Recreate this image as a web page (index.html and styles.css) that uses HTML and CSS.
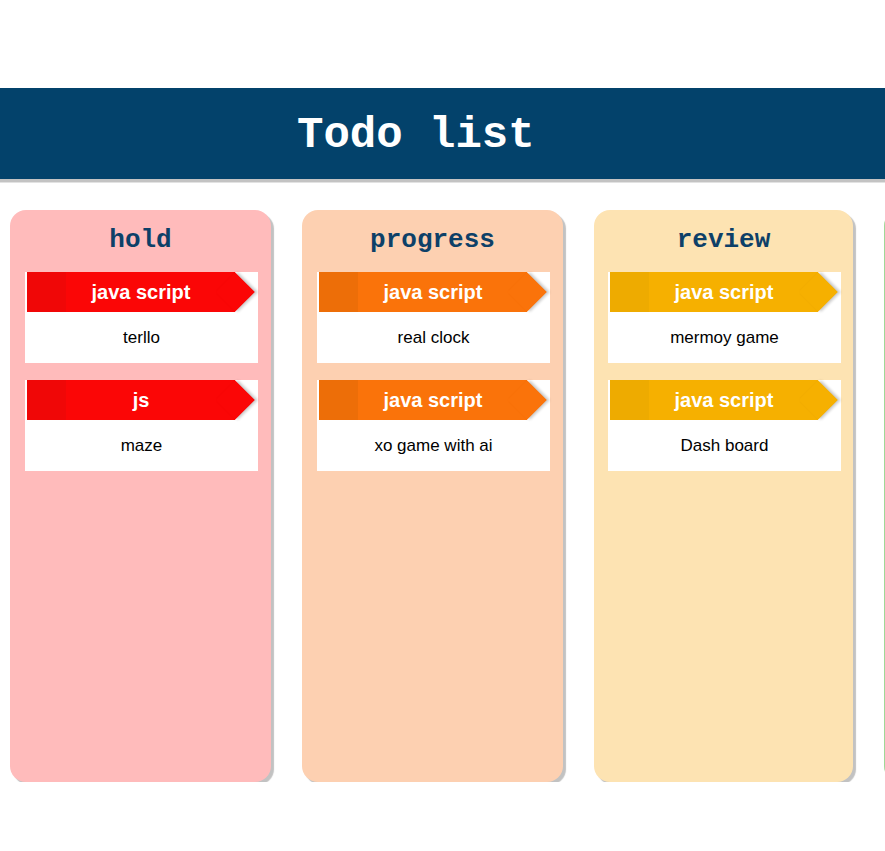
FILE: index.html
```html
<!DOCTYPE html>
<html>
<head>
<meta charset="utf-8">
<title>Todo list</title>
<link rel="stylesheet" href="styles.css">
</head>
<body>
<header class="top">
  <h1 class="title">Todo list</h1>
</header>
<main class="board">
  <section class="col col-hold">
    <h2 class="col-title">hold</h2>
    <div class="card">
      <div class="tag">java script</div>
      <div class="card-body">terllo</div>
    </div>
    <div class="card">
      <div class="tag">js</div>
      <div class="card-body">maze</div>
    </div>
  </section>
  <section class="col col-progress">
    <h2 class="col-title">progress</h2>
    <div class="card">
      <div class="tag">java script</div>
      <div class="card-body">real clock</div>
    </div>
    <div class="card">
      <div class="tag">java script</div>
      <div class="card-body">xo game with ai</div>
    </div>
  </section>
  <section class="col col-review">
    <h2 class="col-title">review</h2>
    <div class="card">
      <div class="tag">java script</div>
      <div class="card-body">mermoy game</div>
    </div>
    <div class="card">
      <div class="tag">java script</div>
      <div class="card-body">Dash board</div>
    </div>
  </section>
  <section class="col col-done"></section>
</main>
</body>
</html>
```
FILE: styles.css
```css
html, body {
  margin: 0;
  padding: 0;
  background: #ffffff;
  overflow: hidden;
}

body {
  font-family: "Liberation Sans", Arial, sans-serif;
}

.top {
  margin-top: 88px;
  height: 91px;
  background: #03426b;
  box-shadow: 0 3px 0 #c3c3c3, 0 4px 0 #e2e2e2;
  display: flex;
  align-items: center;
}

.title {
  margin: 0 0 0 297px;
  font-family: "Liberation Mono", "Courier New", monospace;
  font-weight: bold;
  font-size: 44px;
  color: #ffffff;
  line-height: 1;
  padding-top: 2px;
}

.board {
  display: flex;
  gap: 30px;
  padding: 31px 0 0 10px;
  width: 1200px;
}

.col {
  flex: 0 0 261px;
  height: 572px;
  border-radius: 16px;
  box-shadow: 3px 3px 1px #c2c2c2;
  box-sizing: border-box;
  padding-top: 15px;
}

.col-progress { margin-left: 1px; }
.col-review { margin-left: 1px; flex-basis: 259px; }
.col-done { margin-left: 1px; }
.col-hold { background: #ffbbbb; }
.col-progress { background: #fdd0b1; }
.col-review { background: #fde3b2; }
.col-done { background: #c9efc2; border-left: 1px solid #9fd897; }

.col-title {
  margin: 0 0 17px;
  text-align: center;
  font-family: "Liberation Mono", "Courier New", monospace;
  font-weight: bold;
  font-size: 26px;
  line-height: 30px;
  color: #0d4068;
}

.card {
  width: 233px;
  margin: 0 auto 17px;
  background: #ffffff;
  position: relative;
  left: 1px;
}

.tag {
  position: relative;
  height: 40px;
  margin: 0 23px 0 2px;
  padding-left: 20px;
  box-sizing: border-box;
  text-align: center;
  color: #ffffff;
  font-weight: bold;
  font-size: 20px;
  line-height: 40px;
}

.tag::before {
  content: "";
  position: absolute;
  left: 0;
  top: 0;
  width: 39px;
  height: 40px;
}

.tag::after {
  content: "";
  position: absolute;
  right: -14px;
  top: 6px;
  width: 28px;
  height: 28px;
  transform: rotate(45deg);
  box-shadow: 2px -2px 3px rgba(0, 0, 0, 0.22);
}

.col-hold .tag, .col-hold .tag::after { background: #fb0606; }
.col-hold .tag::before { background: #f00707; }
.col-progress .tag, .col-progress .tag::after { background: #fa730a; }
.col-progress .tag::before { background: #ed6e08; }
.col-review .tag, .col-review .tag::after { background: #f6b000; }
.col-review .tag::before { background: #eeab00; }

.card-body {
  height: 51px;
  line-height: 51px;
  text-align: center;
  font-size: 17px;
  color: #000000;
}
```
